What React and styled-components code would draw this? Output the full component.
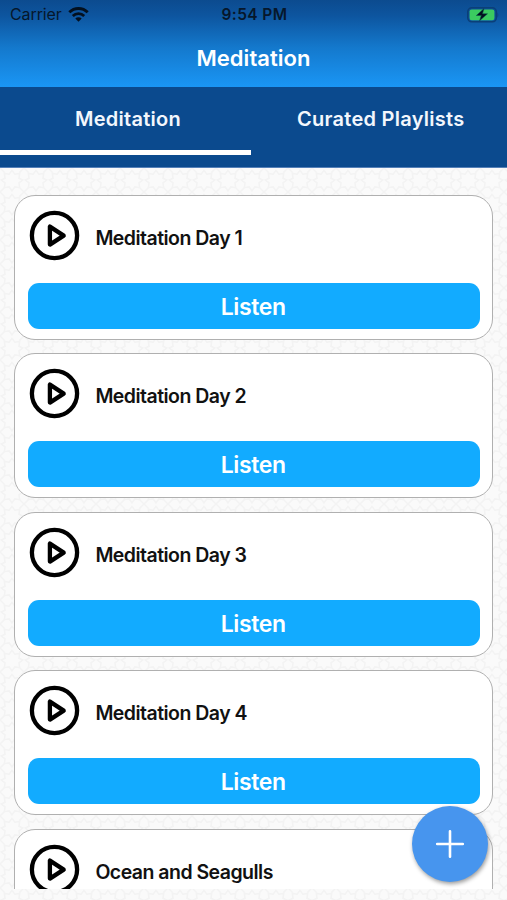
import React from "react";
import styled, { createGlobalStyle } from "styled-components";

const GlobalStyle = createGlobalStyle`
  * { box-sizing: border-box; }
  body { margin: 0; background: #f8f8f8; }
  button { font: inherit; border: 0; padding: 0; margin: 0; background: none; }
`;

const tile = encodeURIComponent(
  `<svg xmlns="http://www.w3.org/2000/svg" width="24" height="24" viewBox="0 0 20 20" fill="none" stroke="#f3f3f3" stroke-width="1.3"><path d="M10 2l2.4 3.2 4-.6-.6 4L19 10l-3.2 2.4.6 4-4-.6L10 19l-2.4-3.2-4 .6.6-4L1 10l3.2-1.4-.6-4 4 .6z"/><path d="M0 0l4 4M20 0l-4 4M0 20l4-4M20 20l-4-4"/></svg>`
);

const Screen = styled.div`
  position: relative;
  width: 507px;
  height: 900px;
  overflow: hidden;
  display: flex;
  flex-direction: column;
  font-family: Inter, "Liberation Sans", sans-serif;
  background: #fafafa url("data:image/svg+xml,${tile}") 0 0;
`;

const Header = styled.header`
  flex: none;
  height: 87px;
  background: linear-gradient(#0c4b8f 0, #0d559f 18%, #1479cd 55%, #1a96f5 100%);
`;

const StatusBar = styled.div`
  display: grid;
  grid-template-columns: 1fr auto 1fr;
  align-items: center;
  height: 29px;
  padding: 0 8px 0 10px;
  font-size: 16px;
  line-height: 29px;
  color: #06172b;
  svg { display: block; }
`;

const Carrier = styled.div`
  display: flex;
  align-items: center;
  gap: 6px;
  letter-spacing: -0.1px;
`;

const Clock = styled.div`
  font-weight: 600;
  font-size: 15.5px;
  letter-spacing: 0.4px;
`;

const Battery = styled.div`
  justify-self: end;
`;

const Title = styled.h1`
  margin: 0;
  height: 58px;
  line-height: 59px;
  text-align: center;
  color: #fff;
  font-size: 22px;
  font-weight: 600;
  letter-spacing: 0.05px;
`;

const Tabs = styled.nav`
  flex: none;
  height: 81px;
  display: grid;
  grid-template-columns: 1fr 1fr;
  background: #0b4a8e;
  border-bottom: 1px solid #5580b8;
`;

const Tab = styled.button`
  height: 67.5px;
  line-height: 64px;
  width: ${(p) => (p.$active ? "251px" : "auto")};
  border-bottom: 5px solid ${(p) => (p.$active ? "#fff" : "transparent")};
  padding-left: ${(p) => (p.$active ? "5px" : "1px")};
  color: #f3f7fd;
  font-size: 20px;
  font-weight: 600;
  letter-spacing: 0.28px;
`;

const List = styled.main`
  flex: none;
  height: 721px;
  padding: 27px 14px 0;
  overflow: hidden;
  display: flex;
  flex-direction: column;
  gap: 13.4px;
`;

const Card = styled.article`
  flex: none;
  height: 145px;
  border: 1.5px solid #b0b0b0;
  border-radius: 21px;
  background: #fff;
  padding: 0 12.5px 0 13px;
`;

const CardHead = styled.div`
  display: flex;
  height: 87px;
  padding: 14px 0 0 1px;
  gap: 15.4px;
  svg { display: block; flex: none; }
`;

const CardTitle = styled.h2`
  margin: 0;
  height: 56px;
  line-height: 56px;
  font-size: 19.5px;
  font-weight: 600;
  color: #111;
  white-space: nowrap;
  letter-spacing: -0.53px;
`;

const Listen = styled.button`
  display: block;
  width: 100%;
  height: 46px;
  padding-right: 1px;
  border-radius: 11px;
  background: #12abff;
  color: #fff;
  font-size: 23px;
  font-weight: 600;
  line-height: 48px;
  letter-spacing: -0.35px;
`;

const AddButton = styled.button`
  position: absolute;
  left: 412px;
  top: 805.5px;
  width: 76px;
  height: 76px;
  border-radius: 50%;
  background: #4795ee;
  box-shadow: 1px 2px 4px rgba(0, 0, 0, 0.4);
  display: grid;
  place-items: center;
`;

const WifiIcon = () => (
  <svg width="21" height="15" viewBox="0 0 21 15" fill="none" stroke="#03101f" strokeWidth="2.8">
    <path d="M1.3 5.3a13 13 0 0 1 18.4 0" />
    <path d="M4.8 8.900a8.300 8.300 0 0 1 11.400 0" />
    <path d="M7.300 11.500a4.600 4.600 0 0 1 6.400 0L10.500 14.700z" fill="#03101f" stroke="none" />
  </svg>
);

const BatteryIcon = () => (
  <svg width="32" height="16" viewBox="0 0 32 16">
    <rect x="0.8" y="0.8" width="28.5" height="14" rx="4" fill="none" stroke="#0b3f78" strokeWidth="1.6" />
    <path d="M30.500 5.500q1.600 2.500 0 5z" fill="#0b3f78" />
    <rect x="2.600" y="2.400" width="24.800" height="10.800" rx="2.200" fill="#3bcb60" />
    <path d="M17 1.600 9.300 8.500h5L12.500 13.800l8-7h-5z" fill="#03101f" stroke="#0b4c4e" strokeWidth=".5" />
  </svg>
);

const PlayIcon = () => (
  <svg width="51" height="51" viewBox="0 0 51 51" fill="none" stroke="#000" strokeWidth="4.3" strokeLinejoin="round">
    <circle cx="25.500" cy="25.500" r="22.600" />
    <path d="M20.900 16.600v18l13.800-9z" strokeWidth="4.300" />
  </svg>
);

const PlusIcon = () => (
  <svg width="30" height="30" viewBox="0 0 30 30" stroke="#fff" strokeWidth="2.6" strokeLinecap="round">
    <path d="M15 2.200v25.600M2.200 15h25.600" />
  </svg>
);

const tracks = [
  { name: "Meditation Day 1", playable: true },
  { name: "Meditation Day 2", playable: true },
  { name: "Meditation Day 3", playable: true },
  { name: "Meditation Day 4", playable: true },
  { name: "Ocean and Seagulls", playable: false },
];

export default function App() {
  return (
    <>
      <GlobalStyle />
      <Screen>
        <Header>
          <StatusBar>
            <Carrier>Carrier <WifiIcon /></Carrier>
            <Clock>9:54 PM</Clock>
            <Battery><BatteryIcon /></Battery>
          </StatusBar>
          <Title>Meditation</Title>
        </Header>
        <Tabs>
          <Tab $active>Meditation</Tab>
          <Tab>Curated Playlists</Tab>
        </Tabs>
        <List>
          {tracks.map((t) => (
            <Card key={t.name}>
              <CardHead>
                <PlayIcon />
                <CardTitle>{t.name}</CardTitle>
              </CardHead>
              {t.playable && <Listen>Listen</Listen>}
            </Card>
          ))}
        </List>
        <AddButton aria-label="Add"><PlusIcon /></AddButton>
      </Screen>
    </>
  );
}
